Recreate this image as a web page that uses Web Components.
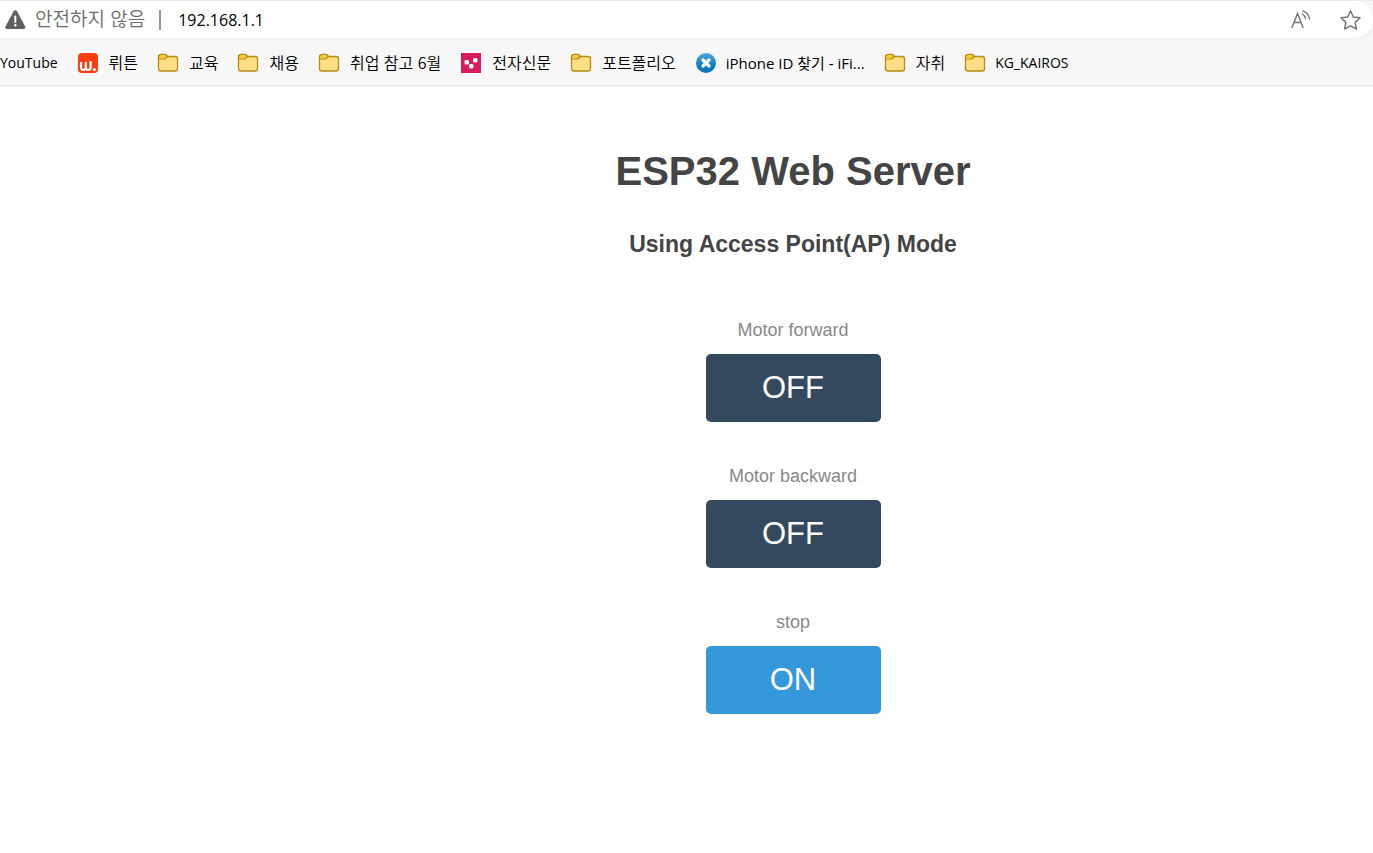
<!DOCTYPE html>
<html lang="ko">
<head>
<meta charset="utf-8">
<meta name="viewport" content="width=device-width, initial-scale=1">
<title>ESP32 Web Server</title>
<style>
body { margin: 0; background: #fff; font-family: "Liberation Sans", sans-serif; }
</style>
</head>
<body>
<browser-bar>
  <address-bar url="192.168.1.1">안전하지 않음</address-bar>
  <bookmark-bar>
    <bookmark-link>YouTube</bookmark-link>
    <bookmark-link icon="wrtn" ko>뤼튼</bookmark-link>
    <bookmark-link icon="folder" ko>교육</bookmark-link>
    <bookmark-link icon="folder" ko>채용</bookmark-link>
    <bookmark-link icon="folder" ko>취업 참고 6월</bookmark-link>
    <bookmark-link icon="news" ko>전자신문</bookmark-link>
    <bookmark-link icon="folder" ko>포트폴리오</bookmark-link>
    <bookmark-link icon="phone" mixed>iPhone ID 찾기 - iFi...</bookmark-link>
    <bookmark-link icon="folder" ko>자취</bookmark-link>
    <bookmark-link icon="folder">KG_KAIROS</bookmark-link>
  </bookmark-bar>
</browser-bar>
<server-page>
  <span slot="title">ESP32 Web Server</span>
  <span slot="subtitle">Using Access Point(AP) Mode</span>
  <motor-switch label="Motor forward">OFF</motor-switch>
  <motor-switch label="Motor backward">OFF</motor-switch>
  <motor-switch label="stop" on>ON</motor-switch>
</server-page>
<script>
const icons = {
  folder: `<svg width="20" height="20" viewBox="1 0 20 20"><path d="M1.500 4V15.500a2.500 2.500 0 0 0 2.500 2.500H18a2.500 2.500 0 0 0 2.500-2.500V6A2.500 2.500 0 0 0 18 3.500H10.500L9 2Q8.500 1.500 8 1.500H4A2.500 2.500 0 0 0 1.500 4z" fill="#ffdf85" stroke="#b58a16" stroke-width="1.300"/><path d="M1.500 4A2.500 2.500 0 0 1 4 1.500H8Q8.500 1.500 9 2L10.300 3.500 8.500 5.500Q8 6 7.300 6H2.500Q1.500 6 1.500 5z" fill="#f8cc38" stroke="#b58a16" stroke-width="1.200"/></svg>`,
  wrtn: `<svg width="20" height="20" viewBox="1 0 20 20"><rect x="1" width="20" height="20" rx="4" fill="#fb3e10"/><path d="M4 9V14Q4 17 6.300 17T8.800 14V9M8.800 14Q8.800 17 11.200 17T13.600 14V8" fill="none" stroke="#fff" stroke-width="2.200"/><circle cx="17.300" cy="16.500" r="1.600" fill="#fff"/></svg>`,
  news: `<svg width="20" height="20" viewBox="1 0 20 20"><rect x="1" width="20" height="20" fill="#d81b5d"/><g fill="#fff"><rect x="4.500" y="7" width="4.500" height="4.500" rx="1.500"/><rect x="9" y="11" width="4.500" height="4.500" rx="1.500"/><rect x="13" y="5" width="4.500" height="4.500" rx="1.500"/></g></svg>`,
  phone: `<svg width="20" height="20" viewBox="1 0 20 20"><defs><linearGradient id="g" x2="0" y2="1"><stop stop-color="#4ba6dc"/><stop offset=".6" stop-color="#127fc3"/><stop offset="1" stop-color="#0871b5"/></linearGradient></defs><circle cx="11" cy="10" r="10" fill="url(#g)"/><path d="M8 7L14 13M14 7L8 13" stroke="#fff" stroke-width="3.200" stroke-linecap="round"/></svg>`
};

class Base extends HTMLElement {
  connectedCallback() {
    if (this.shadowRoot) return;
    this.attachShadow({ mode: "open" }).innerHTML = this.render();
  }
}

customElements.define("browser-bar", class extends Base {
  render() {
    return `<style>
      :host { display: block; background: #f7f7f7; border-top: 1px solid #ececec; border-bottom: 1px solid #e6e6e6; color: #000; }
    </style><slot></slot>`;
  }
});

customElements.define("address-bar", class extends Base {
  render() {
    return `<style>
      :host { display: flex; align-items: center; height: 37px; padding: 0 12px 0 4px; background: #fff; border-radius: 0 19px 19px 0; box-shadow: 0 1px 4px #0000000d; }
      svg { display: block; flex: none; }
      .state { margin-left: 9px; padding-bottom: 4px; font: 350 19px/24px "Noto Sans CJK KR", sans-serif; color: #6c6c6c; white-space: nowrap; }
      .line { width: 2px; height: 20px; margin: 0 17px 0 14px; background: #949494; }
      input { flex: 1; min-width: 0; padding: 0; border: 0; outline: 0; background: none; color: #000; font: 16px/24px "Open Sans", sans-serif; }
      button { display: block; padding: 0; border: 0; background: none; margin-left: 28px; }
    </style>
    <svg width="22" height="20" viewBox="0 0 22 20"><path d="M9.600 1.300a2 2 0 0 1 3.500 0L21 16.300Q22 19 19.500 19H3Q.6 19 1.600 16.300z" fill="#606060"/><path d="M11.300 6.500V12" stroke="#fff" stroke-width="2" stroke-linecap="round"/><circle cx="11.300" cy="15.200" r="1.200" fill="#fff"/></svg>
    <span class="state"><slot></slot></span><span class="line"></span>
    <input aria-label="URL" value="${this.getAttribute("url")}">
    <button aria-label="Read aloud"><svg width="22" height="22" viewBox="0 0 22 22" fill="none" stroke="#767676" stroke-width="1.400" stroke-linecap="round"><path d="M3 18.500L8.500 4.500 14 18.500M5 13.500H12M13.500 5Q16 6.500 16.500 9.500M14 1.800Q19.500 4 20.500 10"/></svg></button>
    <button aria-label="Favorite"><svg width="22" height="22" viewBox="0 0 22 22" fill="none" stroke="#767676" stroke-width="1.500" stroke-linejoin="round"><path d="M11.500 1.800L14.300 8 21 8.800 16.200 13.400 17.400 20 11.500 16.800 5.600 20 6.800 13.400 2 8.800 8.700 8z"/></svg></button>`;
  }
});

customElements.define("bookmark-bar", class extends Base {
  render() {
    return `<style>
      :host { display: flex; align-items: center; gap: 20px; box-sizing: border-box; height: 47px; padding-top: 3px; }
    </style><slot></slot>`;
  }
});

customElements.define("bookmark-link", class extends Base {
  render() {
    return `<style>
      :host { display: block; flex: none; font: 14px/24px "Open Sans", "Noto Sans CJK KR", sans-serif; }
      :host([mixed]) { font-size: 15px; }
      :host([ko]) { font: 350 16px/24px "Noto Sans CJK KR", sans-serif; }
      a { display: flex; align-items: center; gap: 10px; color: inherit; text-decoration: none; white-space: nowrap; }
      :host([ko]) a { gap: 11px; }
      svg { display: block; overflow: visible; }
      span { padding-bottom: 1px; }
      :host([ko]) span { padding-bottom: 3px; }
    </style><a href="#">${icons[this.getAttribute("icon")] || ""}<span><slot></slot></span></a>`;
  }
});

customElements.define("server-page", class extends Base {
  render() {
    return `<style>
      :host { display: flex; flex-direction: column; align-items: center; padding: 61px 0 40px 213px; color: #444; text-align: center; }
      h1 { margin: 0; font-size: 40px; line-height: 48px; }
      h3 { margin: 35px 0 60px; font-size: 23px; line-height: 28px; }
    </style>
    <h1><slot name="title"></slot></h1>
    <h3><slot name="subtitle"></slot></h3>
    <slot></slot>`;
  }
});

customElements.define("motor-switch", class extends Base {
  render() {
    return `<style>
      :host { display: flex; flex-direction: column; align-items: center; gap: 12px; margin-bottom: 42px; }
      label { color: #888; font-size: 18px; line-height: 24px; }
      button { width: 175px; height: 68px; padding: 0; border: 0; border-radius: 5px; background: #34495e; color: #fff; font: 31px/36px "Liberation Sans", sans-serif; cursor: pointer; }
      :host([on]) button { background: #3498db; }
    </style>
    <label for="b">${this.getAttribute("label")}</label>
    <button id="b"><slot></slot></button>`;
  }
});
</script>
</body>
</html>
